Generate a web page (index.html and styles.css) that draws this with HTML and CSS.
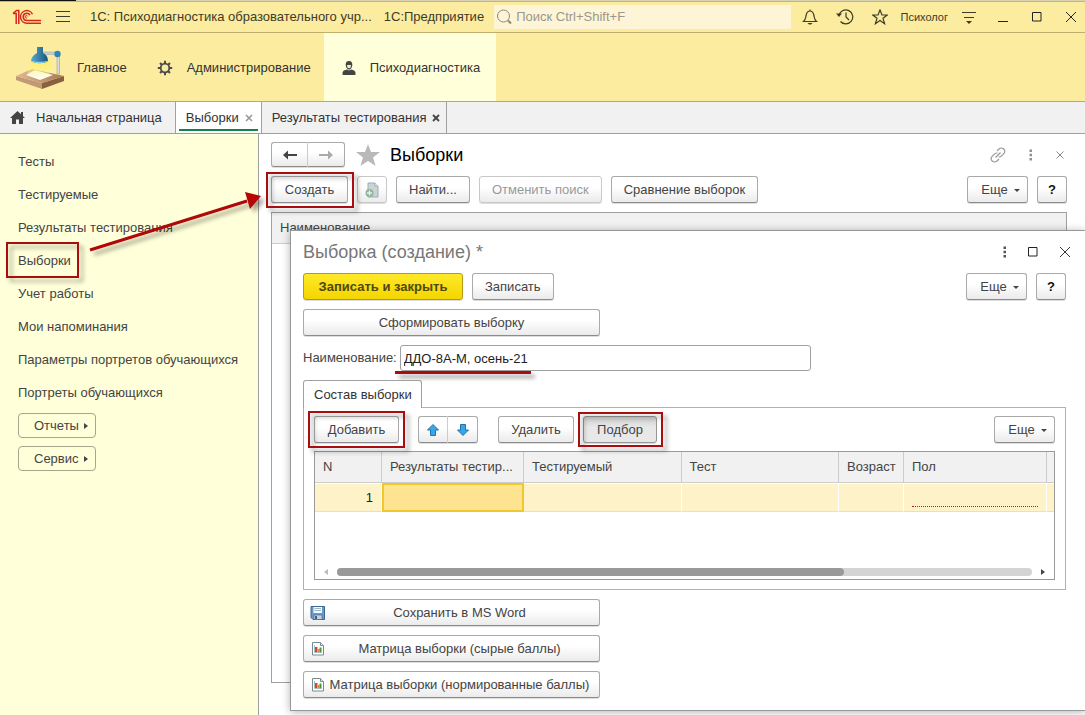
FILE: index.html
```html
<!DOCTYPE html>
<html lang="ru">
<head>
<meta charset="utf-8">
<title>1С: Психодиагностика образовательного учреждения</title>
<link rel="stylesheet" href="styles.css">
</head>
<body>
<div class="app">
  <div class="desk-edge"></div>
  <header class="titlebar">
    <svg class="logo" width="30" height="16" viewBox="0 0 30 16" fill="none" stroke="#d8261c" stroke-width="1.5">
      <path d="M1 4.500h3.200V15M1 4.500L4.500 1.500H6.800V15"/>
      <path d="M20.500 5.200A6.300 6.300 0 1 0 15 14.200H29"/>
      <path d="M18 6.200A3.600 3.600 0 1 0 15 11.500H29"/>
      <path d="M15.800 7.500a1.300 1.300 0 1 0-.8 1.600" stroke-width="1"/>
    </svg>
    <button class="icon-btn burger" aria-label="Меню"><svg width="14" height="12" viewBox="0 0 14 12" stroke="#3f3b26"><path d="M0 .5h14M0 5.500h14M0 10.500h14"/></svg></button>
    <span class="app-name">1С: Психодиагностика образовательного учр...</span>
    <span class="platform">1С:Предприятие</span>
    <div class="search">
      <svg width="16" height="16" viewBox="0 0 16 16" fill="none" stroke="#8f8c7c"><circle cx="7.500" cy="7" r="6"/><path d="M12 11.500l3 3" stroke-width="2.200"/></svg>
      <input type="text" aria-label="Поиск" placeholder="Поиск Ctrl+Shift+F">
    </div>
    <div class="title-tools">
      <button class="icon-btn" aria-label="Уведомления"><svg width="16" height="16" viewBox="0 0 16 16" fill="none" stroke="#3f3b26" stroke-width="1.200"><path d="M8 .5v1.500M1.500 12.500c2.500-2 2-4 2.800-7C4.900 3.300 6 2 8 2s3.100 1.300 3.700 3.500c.8 3 .3 5 2.800 7z"/><path d="M5.500 14h5l-1.500 1.500H7z" fill="#3f3b26" stroke="none"/></svg></button>
      <button class="icon-btn" aria-label="История"><svg width="18" height="16" viewBox="0 0 18 16" fill="none" stroke="#3f3b26" stroke-width="1.200"><path d="M3 6A7 7 0 1 1 4.500 12.500M10 3.500V8l3 3"/><path d="M0 4.500h6L3 8z" fill="#3f3b26" stroke="none"/></svg></button>
      <button class="icon-btn" aria-label="Избранное"><svg width="16" height="16" viewBox="0 0 16 16" fill="none" stroke="#3f3b26" stroke-width="1.200"><path d="M8 1l2 5h5.200l-4.200 3.300 1.600 5.400L8 11.500l-4.600 3.200L5 9.300.8 6H6z"/></svg></button>
      <button class="user">Психолог</button>
      <button class="icon-btn" aria-label="Настройки"><svg width="16" height="16" viewBox="0 0 16 16" stroke="#3f3b26"><path d="M1 3.500h14M3 8.500h10"/><path d="M5 12h6l-3 3z" fill="#3f3b26" stroke="none"/></svg></button>
      <button class="icon-btn window-btn" aria-label="Свернуть"><svg width="10" height="12" viewBox="0 0 10 12" stroke="#222"><path d="M0 10.500h10"/></svg></button>
      <button class="icon-btn window-btn" aria-label="Развернуть"><svg width="10" height="10" viewBox="0 0 10 10" fill="none" stroke="#222"><path d="M.5.5h8.500v8.500H.5z"/></svg></button>
      <button class="icon-btn window-btn" aria-label="Закрыть"><svg width="12" height="12" viewBox="0 0 12 12" stroke="#222"><path d="M1 1l10 10M11 1L1 11"/></svg></button>
    </div>
  </header>

  <nav class="sections">
    <a class="section section-main" href="#">
      <svg width="52" height="44" viewBox="0 0 52 44">
        <defs>
          <linearGradient id="wood" x1="0" x2="1"><stop offset="0" stop-color="#e0b994"/><stop offset="1" stop-color="#a67a58"/></linearGradient>
          <linearGradient id="beam" x1="0" y1="0" x2="0" y2="1"><stop offset="0" stop-color="#fff04d"/><stop offset="1" stop-color="#fff8b0" stop-opacity=".4"/></linearGradient>
          <linearGradient id="shade" x1="0" x2="1"><stop offset="0" stop-color="#57aad0"/><stop offset="1" stop-color="#17567c"/></linearGradient>
        </defs>
        <path d="M1 30l26 7v6L1 34z" fill="#c39874"/><path d="M27 37l22-7v5L27 43z" fill="#8a6140"/>
        <path d="M1 30l16-7 32 7-22 7z" fill="url(#wood)"/>
        <path d="M11 29l9-5 18 5-13 5z" fill="#fffdf0"/>
        <path d="M42 10h2.500v18H42z" fill="#d5dce0" stroke="#8b959b" stroke-width=".5"/>
        <path d="M28 6h14v2.500H28z" fill="#c4cdd2" stroke="#8b959b" stroke-width=".4"/>
        <circle cx="42.500" cy="8" r="3.200" fill="#2f86b5"/>
        <path d="M17 15h17l4 11-12 6-14-4z" fill="url(#beam)" opacity=".7"/>
        <path d="M22 1h6v6c4 2 5 5 5 8-4 3-13 3-17 0 0-3 2-6 6-8z" fill="url(#shade)"/>
        <path d="M16 14.500c4 1.800 13 1.800 17 0-3 3.500-14 3.500-17 0z" fill="#8fd1ec"/>
      </svg>
      <span>Главное</span>
    </a>
    <a class="section section-admin" href="#">
      <svg width="16" height="16" viewBox="0 0 16 16" fill="none" stroke="#4a4a4a"><circle cx="8" cy="8" r="4.300" stroke-width="1.800"/><path d="M8 .8v2.500M8 12.700v2.500M.8 8h2.500M12.700 8h2.500M3 3l1.800 1.800M11.200 11.200L13 13M13 3l-1.800 1.800M4.800 11.200L3 13" stroke-width="2"/></svg>
      <span>Администрирование</span>
    </a>
    <a class="section section-psych current" href="#">
      <svg width="14" height="16" viewBox="0 0 14 16"><path d="M1.500 15C.5 15 .5 14.500.5 13c0-2 1.500-3 4.500-3.500l2 1 2-1c3 .5 4.500 1.500 4.500 3.500 0 1.500 0 2-1 2z" fill="#444"/><path d="M3.700 4.500C3.700 2 5 1 7 1s3.300 1 3.300 3.500S9 9.500 7 9.500 3.700 7 3.700 4.500z" fill="#444"/><path d="M5 5h4c0 2-.7 3.300-2 3.300S5 7 5 5z" fill="#eeeecb"/></svg>
      <span>Психодиагностика</span>
    </a>
  </nav>

  <nav class="tabs">
    <a class="tab tab-home" href="#"><svg width="15" height="13" viewBox="0 0 15 13"><path d="M7.500 0L15 7h-2v6H9V8.500H6V13H2V7H0z" fill="#444"/><path d="M11 1h2v4h-2z" fill="#444"/></svg>Начальная страница</a>
    <a class="tab current" href="#"><span>Выборки</span><svg width="8" height="8" viewBox="0 0 8 8" stroke="#999" stroke-width="1.600"><path d="M1 1l6 6M7 1L1 7"/></svg></a>
    <a class="tab" href="#"><span>Результаты тестирования</span><svg width="8" height="8" viewBox="0 0 8 8" stroke="#444" stroke-width="1.800"><path d="M1 1l6 6M7 1L1 7"/></svg></a>
  </nav>

  <div class="workspace">
    <aside class="sidebar">
      <a href="#">Тесты</a>
      <a href="#">Тестируемые</a>
      <a href="#">Результаты тестирования</a>
      <a href="#" class="marked">Выборки<i class="mark mark-link"></i></a>
      <a href="#">Учет работы</a>
      <a href="#">Мои напоминания</a>
      <a href="#">Параметры портретов обучающихся</a>
      <a href="#">Портреты обучающихся</a>
      <button class="side-btn">Отчеты<i class="tri-right"></i></button>
      <button class="side-btn">Сервис<i class="tri-right"></i></button>
      <svg class="arrow" width="190" height="80" viewBox="0 0 190 80"><path d="M8 62L165 13" stroke="#b00808" stroke-width="3"/><path d="M163 4l16 4-11 13z" fill="#b80606"/></svg>
    </aside>

    <main class="list-form">
      <div class="form-head">
        <div class="btn-pair nav-pair">
          <button class="btn" aria-label="Назад"><svg width="14" height="10" viewBox="0 0 14 10"><path d="M0 5l5-4.500v3.400h9v2.200H5v3.400z" fill="#444"/></svg></button>
          <button class="btn" aria-label="Вперед"><svg width="14" height="10" viewBox="0 0 14 10"><path d="M14 5L9 .5v3.400H0v2.200h9v3.400z" fill="#aaa"/></svg></button>
        </div>
        <svg class="fav" width="24" height="22" viewBox="0 0 24 22"><path d="M12 0l3 8h9l-7 5.500 2.600 8.500L12 17l-7.600 5L7 13.500 0 8h9z" fill="#b9b9b9"/></svg>
        <h1>Выборки</h1>
        <div class="head-tools">
          <button class="icon-btn" aria-label="Ссылка"><svg width="16" height="16" viewBox="0 0 16 16" fill="none" stroke="#999" stroke-width="1.200"><path d="M7 4l2-2c1.300-1.300 3.500-1.300 4.800 0s1.300 3.300 0 4.600l-2.500 2.500c-.8.800-1.800 1-2.800.9M9 12l-2 2c-1.300 1.300-3.500 1.300-4.800 0s-1.300-3.300 0-4.600l2.500-2.500c.8-.8 1.800-1 2.800-.9M5.500 10.500l5-5"/></svg></button>
          <button class="icon-btn" aria-label="Действия"><svg width="4" height="12" viewBox="0 0 4 12" fill="#909090"><path d="M.5.5h2.500V3H.5zM.5 4.700h2.500v2.500H.5zM.5 9h2.500v2.500H.5z"/></svg></button>
          <button class="icon-btn" aria-label="Закрыть"><svg width="8" height="8" viewBox="0 0 8 8" stroke="#888"><path d="M.5.5l7 7M7.500.5l-7 7"/></svg></button>
        </div>
      </div>
      <div class="commands">
        <span class="marked create"><button class="btn">Создать</button><i class="mark mark-create"></i></span>
        <button class="btn btn-copy" aria-label="Скопировать" disabled><svg width="16" height="16" viewBox="0 0 16 16"><path d="M4 1h7l3 3v11H4z" fill="#c9d4d4" stroke="#9fabae"/><path d="M11 1v3h3" fill="#fff" stroke="#9fabae"/><circle cx="5.500" cy="11" r="4" fill="#8fb59c"/><path d="M5.500 8.500v5M3 11h5" stroke="#e8f3ea" stroke-width="1.300"/></svg></button>
        <button class="btn">Найти...</button>
        <button class="btn" disabled>Отменить поиск</button>
        <button class="btn">Сравнение выборок</button>
        <span class="spacer"></span>
        <button class="btn more">Еще<i class="tri-down"></i></button>
        <button class="btn help">?</button>
      </div>
      <div class="list"><div class="list-head">Наименование</div></div>

      <section class="dialog" role="dialog" aria-labelledby="dlg-title">
        <div class="dialog-head">
          <h2 id="dlg-title">Выборка (создание) *</h2>
          <button class="icon-btn" aria-label="Действия"><svg width="4" height="12" viewBox="0 0 4 12" fill="#555"><path d="M.5.5h2.500V3H.5zM.5 4.700h2.500v2.500H.5zM.5 9h2.500v2.500H.5z"/></svg></button>
          <button class="icon-btn" aria-label="Развернуть"><svg width="10" height="10" viewBox="0 0 10 10" fill="none" stroke="#222"><path d="M.5.5h8.500v8.500H.5z"/></svg></button>
          <button class="icon-btn" aria-label="Закрыть"><svg width="12" height="12" viewBox="0 0 12 12" stroke="#333"><path d="M1 1l10 10M11 1L1 11"/></svg></button>
        </div>
        <div class="bar">
          <button class="btn primary">Записать и закрыть</button>
          <button class="btn">Записать</button>
          <span class="spacer"></span>
          <button class="btn more">Еще<i class="tri-down"></i></button>
          <button class="btn help">?</button>
        </div>
        <button class="btn wide">Сформировать выборку</button>
        <div class="field">
          <label for="name">Наименование:</label>
          <div class="marked name-box"><input id="name" type="text" value="ДДО-8А-М, осень-21"><i class="underline"></i></div>
        </div>
        <div class="pages">
          <button class="page-tab">Состав выборки</button>
          <div class="page">
            <div class="bar">
              <span class="marked add"><button class="btn">Добавить</button><i class="mark mark-add"></i></span>
              <div class="btn-pair move-pair">
                <button class="btn" aria-label="Вверх"><svg width="12" height="12" viewBox="0 0 12 12"><path d="M6 .5L11.500 6H8.500v5.500h-5V6H.5z" fill="#3aa5e8" stroke="#2374a8"/></svg></button>
                <button class="btn" aria-label="Вниз"><svg width="12" height="12" viewBox="0 0 12 12"><path d="M6 11.500L.5 6h3V.5h5V6h3z" fill="#3aa5e8" stroke="#2374a8"/></svg></button>
              </div>
              <button class="btn delete">Удалить</button>
              <span class="marked pick"><button class="btn pressed">Подбор</button><i class="mark mark-pick"></i></span>
              <span class="spacer"></span>
              <button class="btn more">Еще<i class="tri-down"></i></button>
            </div>
            <div class="grid-box">
              <table>
                <colgroup><col class="c-n"><col class="c-res"><col class="c-half"><col class="c-half"><col class="c-age"><col class="c-sex"><col class="c-end"></colgroup>
                <thead><tr><th>N</th><th>Результаты тестир...</th><th>Тестируемый</th><th>Тест</th><th>Возраст</th><th>Пол</th><th></th></tr></thead>
                <tbody><tr><td class="num">1</td><td class="active"></td><td></td><td></td><td></td><td class="required"><div></div></td><td></td></tr></tbody>
              </table>
              <div class="scroll"><i class="tri-left"></i><div class="track"><div class="thumb"></div></div><i class="tri-right"></i></div>
            </div>
          </div>
        </div>
        <div class="exports">
          <button class="btn wide with-icon"><svg width="16" height="16" viewBox="0 0 16 16"><path d="M1 1.500h13.500v13H3L1 12.500z" fill="#6b9ac6" stroke="#3b6690"/><path d="M3.500 2h8.500v6H3.500z" fill="#f4f8fb"/><path d="M4.500 3.500h6.500M4.500 5.500h6.500" stroke="#9db7cc"/><path d="M4 10h8v4.500H4z" fill="#c5d2dc" stroke="#3d6489" stroke-width=".6"/><path d="M5 11h2v3H5z" fill="#3d6489"/></svg><span>Сохранить в MS Word</span></button>
          <button class="btn wide with-icon"><svg width="16" height="16" viewBox="0 0 16 16"><path d="M2.500 1.500h8l3 3v9.500h-11z" fill="#fff" stroke="#7c8a90"/><path d="M10.500 1.500v3h3" fill="#dde5e8" stroke="#7c8a90"/><path d="M5 6h2.500v5H5z" fill="#d8432c"/><path d="M4.500 4v7.500H12" fill="none" stroke="#abb"/><path d="M8 8h1.500v3H8z" fill="#e8842c"/><path d="M9.500 6.500h2V11h-2z" fill="#3f9a3c"/></svg><span>Матрица выборки (сырые баллы)</span></button>
          <button class="btn wide with-icon"><svg width="16" height="16" viewBox="0 0 16 16"><path d="M2.500 1.500h8l3 3v9.500h-11z" fill="#fff" stroke="#7c8a90"/><path d="M10.500 1.500v3h3" fill="#dde5e8" stroke="#7c8a90"/><path d="M5 6h2.500v5H5z" fill="#d8432c"/><path d="M4.500 4v7.500H12" fill="none" stroke="#abb"/><path d="M8 8h1.500v3H8z" fill="#e8842c"/><path d="M9.500 6.500h2V11h-2z" fill="#3f9a3c"/></svg><span>Матрица выборки (нормированные баллы)</span></button>
        </div>
      </section>
    </main>
  </div>
</div>
</body>
</html>
```
FILE: styles.css
```css
* { box-sizing: border-box; }
body { margin: 0; background: #fff; color: #444; font: 13px/16px "Liberation Sans", Arial, sans-serif; overflow: hidden; }
button, input { font: inherit; color: inherit; }
button { cursor: pointer; margin: 0; }
a { color: inherit; text-decoration: none; }
svg { display: block; flex: none; }
i { display: block; }
h1, h2 { margin: 0; font-weight: 400; }
.app { display: flex; flex-direction: column; min-height: 100vh; }
.spacer { flex: 1; }

.desk-edge { height: 2px; border-bottom: 1px solid #bdb58c; background: linear-gradient(90deg, #111 76px, #d8d2b0 76px); }
.titlebar { display: flex; align-items: center; height: 31px; padding: 0 6px 0 12px; background: #fbeca0; border-bottom: 1px solid #bfae6c; color: #3f3b26; }
.icon-btn { display: flex; align-items: center; justify-content: center; padding: 0; border: 0; background: none; }
.burger { margin: 0 20px 0 14px; }
.app-name { white-space: nowrap; }
.platform { margin: 0 10px 0 12px; white-space: nowrap; }
.search { display: flex; flex: 1; align-items: center; gap: 4px; height: 24px; padding-left: 2px; background: #fef5d6; }
.search input { flex: 1; min-width: 0; padding: 0; border: 0; outline: 0; background: none; }
.search input::placeholder { color: #9b978a; opacity: 1; }
.title-tools { display: flex; align-items: center; gap: 18px; padding-left: 11px; }
.user { margin-left: -5px; margin-right: -5px; padding: 0; border: 0; background: none; font-size: 11px; }
.window-btn { width: 16px; }

.sections { display: flex; height: 69px; background: #fbeca0; border-bottom: 1px solid #bfa668; color: #333; }
.section { display: flex; align-items: center; padding-top: 1px; }
.section-main { gap: 10px; padding-left: 15px; padding-right: 16px; }
.section-admin { gap: 14px; padding-left: 14px; padding-right: 13px; }
.section-psych { gap: 14px; padding-left: 18px; padding-right: 16px; }
.section.current { background: #ffffd9; }

.tabs { display: flex; height: 32px; background: #f1f1f1; border-bottom: 1px solid #a0a0a0; color: #333; }
.tab { display: flex; align-items: center; gap: 6px; padding: 0 6px 0 10px; border-right: 1px solid #a0a0a0; }
.tab-home { gap: 11px; padding-right: 13px; }
.tab.current { padding-right: 8px; background: linear-gradient(#12824c, #12824c) 3px 27px / calc(100% - 6px) 2px no-repeat #fff; }

.workspace { display: flex; flex: 1; }
.sidebar { position: relative; display: flex; flex-direction: column; align-items: flex-start; gap: 17px; flex: none; width: 259px; padding: 20px 18px; background: #ffffd9; border-right: 1px solid #a0a0a0; }
.side-btn { display: flex; align-items: center; gap: 5px; width: 78px; height: 25px; margin-bottom: -9px; padding: 0 0 0 15px; border: 1px solid #a6a68c; border-radius: 4px; background: none; }
.side-btn:first-of-type { margin-top: -5px; }
.tri-right { border: 3px solid transparent; border-left: 4px solid #444; border-right: 0; }
.tri-left { border: 3px solid transparent; border-right: 4px solid #bbb; border-left: 0; }
.tri-down { border: 3px solid transparent; border-top: 3px solid #444; border-bottom: 0; }
.arrow { position: absolute; left: 82px; top: 54px; z-index: 3; filter: drop-shadow(4px 4px 2px rgba(0, 0, 0, .35)); }

.marked { position: relative; }
.mark { position: absolute; z-index: 2; border: 2px solid #a80d10; pointer-events: none; filter: drop-shadow(4px 4px 2px rgba(0, 0, 0, .35)); }
.mark-link { inset: -11px -8px -9px -12px; }
.mark-create { inset: -4px -6px -5px -5px; }
.mark-add { inset: -5px -6px; }
.mark-pick { inset: -4px -6px -4px -5px; }
.underline { position: absolute; left: -5px; top: 26px; width: 136px; height: 3px; background: #a80d10; filter: drop-shadow(4px 4px 2px rgba(0, 0, 0, .4)); }

.list-form { position: relative; display: flex; flex-direction: column; flex: 1; min-width: 0; padding: 8px 18px 32px 12px; }
.btn { display: flex; align-items: center; justify-content: center; flex: none; height: 27px; padding: 1px 12px 0; border: 1px solid #aaa; border-bottom-color: #8c8c8c; border-radius: 3px; background: linear-gradient(#fff 40%, #ebebeb); box-shadow: 0 1px 0 #ddd; white-space: nowrap; }
.btn:disabled { color: #999; border-color: #c8c8c8; }
.btn.primary { width: 160px; border-color: #b39b12; background: linear-gradient(#ffe928, #f3d500); color: #50480f; font-weight: 700; }
.btn.pressed { border-color: #969696; background: linear-gradient(#cfcfcf, #e8e8e8 40%); }
.btn.more { gap: 6px; padding-right: 6px; width: 61px; }
.btn.help { width: 30px; padding-left: 0; padding-right: 0; color: #111; font-weight: 700; }
.btn.wide { width: 297px; }
.btn-pair { display: flex; }
.btn-pair .btn { padding: 0; }
.btn-pair .btn:first-child { border-radius: 3px 0 0 3px; border-right-color: #ccc; }
.btn-pair .btn:last-child { border-radius: 0 3px 3px 0; border-left: 0; }
.nav-pair .btn { width: 37px; height: 25px; }
.form-head { display: flex; align-items: center; }
.fav { margin: 0 10px 0 11px; }
h1 { color: #000; font-size: 18px; line-height: 22px; }
.head-tools { display: flex; gap: 23px; margin-left: auto; padding-right: 3px; }
.commands { display: flex; gap: 9px; margin: 9px 0; }
.create .btn { width: 77px; }
.commands .btn-copy { width: 30px; padding: 0; }
.list { flex: 1; border: 1px solid #a0a0a0; }
.list-head { height: 31px; padding: 7px 8px; border-bottom: 1px solid #ccc; background: #f1f1f1; }

.dialog { position: absolute; left: 31px; right: 0; top: 96px; z-index: 1; padding: 0 19px 12px 12px; border: 1px solid #989898; border-right: 0; background: #fff; box-shadow: 0 1px 8px rgba(0, 0, 0, .3); }
.dialog-head { display: flex; align-items: center; gap: 21px; height: 42px; padding-right: 1px; margin-right: -6px; }
h2 { flex: 1; color: #777; font-size: 18px; line-height: 22px; }
.bar { display: flex; gap: 9px; }
.dialog > .wide { margin: 9px 0; }
.field { display: flex; align-items: center; gap: 3px; }
.name-box { flex: 0 1 411px; }
.name-box input { display: block; width: 100%; height: 26px; padding: 0 3px; border: 1px solid #a0a0a0; border-radius: 3px; background: #fff; color: #222; }
.pages { margin-top: 9px; }
.page-tab { display: block; position: relative; height: 28px; margin-bottom: -1px; padding: 0 9px 0 10px; border: 1px solid #a0a0a0; border-bottom: 0; border-radius: 3px 3px 0 0; background: #fff; color: #333; }
.page { padding: 8px 10px 9px; border: 1px solid #b0b0b0; }
.add .btn { width: 85px; }
.move-pair { margin: 0 11px 0 10px; }
.move-pair .btn { width: 30px; }
.delete { width: 76px; }
.pick .btn { width: 74px; }
.grid-box { margin-top: 8px; border: 1px solid #999; }
table { width: 100%; table-layout: fixed; border-collapse: separate; border-spacing: 0; }
.c-n { width: 67px; } .c-res { width: 142px; } .c-age { width: 65px; } .c-sex { width: 143px; } .c-end { width: 7px; }
th { height: 31px; padding: 0 8px; overflow: hidden; border-right: 1px solid #ccc; border-bottom: 1px solid #ccc; background: #f1f1f1; font-weight: 400; text-align: left; white-space: nowrap; }
td { height: 29px; padding: 0 8px; border-right: 1px solid #fff; border-top: 1px solid #fff; border-bottom: 1px solid #e2e0d4; background: #fdf2c8; color: #222; }
th:last-child, td:last-child { padding: 0; border-right: 0; }
.num { text-align: right; }
.active { border: 2px solid #f0c82d; background: #fee391; }
.required div { height: 18px; border-bottom: 1px dotted #d01818; }
.scroll { display: flex; align-items: center; gap: 9px; margin-top: 51px; padding: 4px 9px 3px; height: 16px; }
.track { flex: 1; height: 8px; border-radius: 4px; background: #d4d4d4; }
.thumb { width: 73%; height: 8px; border-radius: 4px; background: #999; }
.exports { display: flex; flex-direction: column; gap: 9px; margin-top: 9px; }
.with-icon { justify-content: flex-start; padding: 0 6px; }
.with-icon span { flex: 1; }
```
